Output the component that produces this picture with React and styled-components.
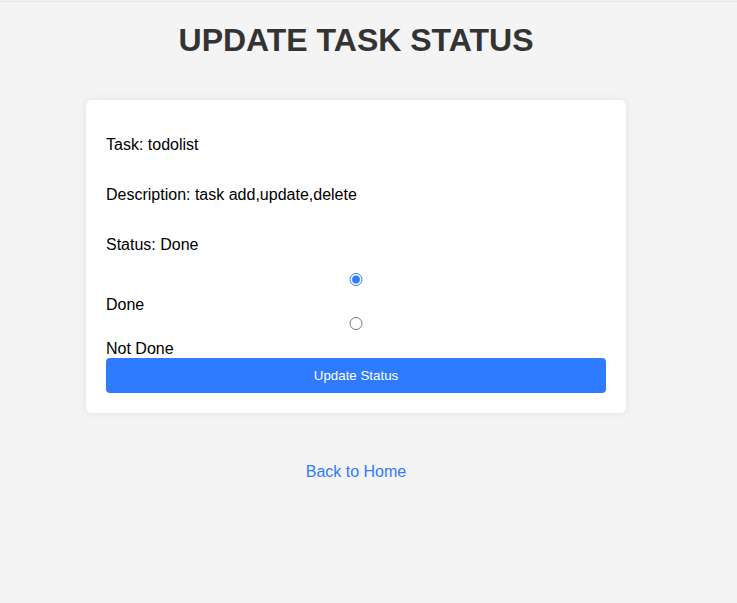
import React, { useState } from 'react';
import styled, { createGlobalStyle } from 'styled-components';

const GlobalStyle = createGlobalStyle`
  html, body {
    margin: 0;
    padding: 0;
    background-color: #f4f4f4;
    font-family: Arial, "Liberation Sans", sans-serif;
  }
  body {
    border-top: 1px solid #ebe3eb;
    margin-top: 1px;
    min-height: 601px;
  }
`;

const Page = styled.div`
  width: 712px;
  display: flex;
  flex-direction: column;
  align-items: center;
`;

const Title = styled.h1`
  margin: 20px 0 41px;
  font-size: 32px;
  font-weight: bold;
  color: #333;
  text-align: center;
`;

const Card = styled.form`
  width: 500px;
  padding: 20px;
  background: #fff;
  border-radius: 6px;
  box-shadow: 0 0 8px rgba(0, 0, 0, 0.08);
  display: flex;
  flex-direction: column;
`;

const Info = styled.p`
  margin: 16px 0;
  font-size: 16px;
  color: #000;
`;

const Radio = styled.input`
  margin: 3px 0 10px;
  height: 13px;
  accent-color: #2f7bff;
`;

const OptionLabel = styled.label`
  font-size: 16px;
  line-height: 18px;
  color: #000;
`;

const Button = styled.button`
  height: 35px;
  border: none;
  border-radius: 4px;
  background-color: #2f7bff;
  color: #fff;
  font-family: Arial, "Liberation Sans", sans-serif;
  font-size: 13.333px;
  cursor: pointer;
`;

const HomeLink = styled.a`
  margin-top: 50px;
  font-size: 16px;
  color: #2f7bff;
  text-decoration: none;
`;

const App = () => {
  const [status, setStatus] = useState('Done');

  return (
    <Page>
      <GlobalStyle />
      <Title>UPDATE TASK STATUS</Title>
      <Card onSubmit={(e) => e.preventDefault()}>
        <Info>Task: todolist</Info>
        <Info>Description: task add,update,delete</Info>
        <Info>Status: Done</Info>
        <Radio
          type="radio"
          id="done"
          name="status"
          checked={status === 'Done'}
          onChange={() => setStatus('Done')}
        />
        <OptionLabel htmlFor="done">Done</OptionLabel>
        <Radio
          type="radio"
          id="notdone"
          name="status"
          checked={status === 'Not Done'}
          onChange={() => setStatus('Not Done')}
        />
        <OptionLabel htmlFor="notdone">Not Done</OptionLabel>
        <Button type="submit">Update Status</Button>
      </Card>
      <HomeLink href="#">Back to Home</HomeLink>
    </Page>
  );
};

export default App;
